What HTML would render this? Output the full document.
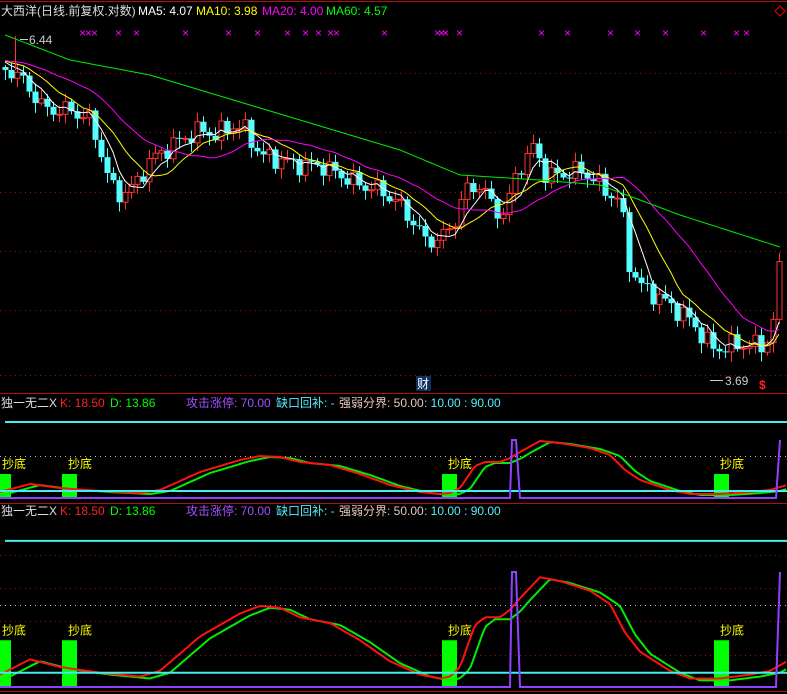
<!DOCTYPE html>
<html><head><meta charset="utf-8"><style>
html,body{margin:0;padding:0;background:#000;width:787px;height:694px;overflow:hidden}
svg{display:block}
text{font-family:"Liberation Sans","Noto Sans CJK SC",sans-serif;font-size:12px}
</style></head><body>
<svg id="s" width="787" height="694" xmlns="http://www.w3.org/2000/svg">
<rect width="787" height="694" fill="#000"/>
<g id="grid" stroke="#a01010" stroke-dasharray="1,4" stroke-width="1">
<line x1="0" y1="73.5" x2="787" y2="73.5"/><line x1="0" y1="132.5" x2="787" y2="132.5"/>
<line x1="0" y1="192.5" x2="787" y2="192.5"/><line x1="0" y1="251.5" x2="787" y2="251.5"/>
<line x1="0" y1="310.5" x2="787" y2="310.5"/><line x1="0" y1="375.5" x2="787" y2="375.5"/>
<line x1="0" y1="555.5" x2="787" y2="555.5"/><line x1="0" y1="588.5" x2="787" y2="588.5"/>
<line x1="0" y1="621.5" x2="787" y2="621.5"/><line x1="0" y1="655.5" x2="787" y2="655.5"/>
</g>
<line x1="0" y1="456.5" x2="787" y2="456.5" stroke="#e0b0a0" stroke-dasharray="1,4"/>
<line x1="0" y1="605.5" x2="787" y2="605.5" stroke="#e0b0a0" stroke-dasharray="1,4"/>
<line x1="0" y1="393.5" x2="787" y2="393.5" stroke="#b01010"/>
<line x1="0" y1="503.5" x2="787" y2="503.5" stroke="#b01010"/>
<line x1="0" y1="691.5" x2="787" y2="691.5" stroke="#b01010"/>
<line x1="0" y1="1.5" x2="787" y2="1.5" stroke="#b01010"/>
<g id="main"></g>
<g font-size="13">
<text x="1" y="15" fill="#ddd" font-size="13">大西洋(日线.前复权.对数)</text>
<text x="138" y="15" fill="#fff" font-size="13">MA5: 4.07</text>
<text x="196" y="15" fill="#ff0" font-size="13">MA10: 3.98</text>
<text x="262" y="15" fill="#f0f" font-size="13">MA20: 4.00</text>
<text x="326" y="15" fill="#0f0" font-size="13">MA60: 4.57</text>
</g>
<path d="M780 6 L785 11 L780 16 L775 11Z" fill="none" stroke="#e00"/>
<text x="29" y="44" fill="#ccc" font-size="13">6.44</text>
<line x1="20" y1="39.5" x2="28" y2="39.5" stroke="#ccc"/>
<text x="725" y="385" fill="#ccc" font-size="13">3.69</text>
<line x1="710" y1="380.5" x2="723" y2="380.5" stroke="#ccc"/>
<rect x="416" y="376" width="15" height="15" fill="#103060"/>
<text x="417" y="388" fill="#fff">财</text>
<text x="759" y="389" fill="#f22" font-weight="bold">$</text>
<g id="pan"></g>
<g font-size="12">
<text x="1" y="407" fill="#ddd">独一无二X</text><text x="60" y="407" fill="#f22">K: 18.50</text><text x="110" y="407" fill="#0f0">D: 13.86</text>
<text x="186" y="407" fill="#a050ff">攻击涨停: 70.00</text><text x="276" y="407" fill="#5ef">缺口回补: -</text>
<text x="339" y="407" fill="#e8c8b8">强弱分界: 50.00</text><text x="424" y="407" fill="#5ef">: 10.00 : 90.00</text>
<text x="1" y="515" fill="#ddd">独一无二X</text><text x="60" y="515" fill="#f22">K: 18.50</text><text x="110" y="515" fill="#0f0">D: 13.86</text>
<text x="186" y="515" fill="#a050ff">攻击涨停: 70.00</text><text x="276" y="515" fill="#5ef">缺口回补: -</text>
<text x="339" y="515" fill="#e8c8b8">强弱分界: 50.00</text><text x="424" y="515" fill="#5ef">: 10.00 : 90.00</text>
</g>
</svg>
<script>
(function(){
var NS="http://www.w3.org/2000/svg";
function el(p,t,a){var e=document.createElementNS(NS,t);for(var k in a)e.setAttribute(k,a[k]);p.appendChild(e);return e;}
function interp(k,x){for(var i=0;i<k.length-1;i++){if(x<=k[i+1][0]){var t=(x-k[i][0])/(k[i+1][0]-k[i][0]);return k[i][1]+t*(k[i+1][1]-k[i][1]);}}return k[k.length-1][1];}
var main=document.getElementById('main');
var ck=[[5,70],[15,72],[30,90],[45,110],[70,110],[90,120],[100,150],[110,185],[120,195],[135,185],[150,160],[165,150],[180,140],[200,130],[215,135],[235,125],[245,130],[260,155],[280,160],[300,165],[320,165],[340,175],[360,185],[380,190],[400,205],[415,225],[425,240],[440,240],[455,220],[465,190],[480,185],[495,210],[505,215],[515,175],[525,160],[535,145],[545,175],[560,175],[580,170],[595,180],[610,195],[620,200],[630,270],[640,285],[655,295],[670,305],[690,320],[705,340],[715,350],[730,345],[745,345],[765,345],[772,330],[780,260]];
var C=[],X=[];
for(var i=0;i<130;i++){var x=5+6*i;X.push(x);C.push(interp(ck,x)+7*Math.sin(i*1.7)+4*Math.sin(i*3.1));}
for(var i=0;i<130;i++){var o=i?C[i-1]:C[0]-3,c=C[i];var up=c<o;var tp=Math.min(o,c),bt=Math.max(o,c);if(bt-tp<1)bt=tp+1;
var hi=tp-2-7*Math.abs(Math.sin(i*2.3)),lo=bt+2+8*Math.abs(Math.cos(i*1.3));
var col=up?"#f33":"#5ff";
el(main,"line",{x1:X[i]+.5,y1:hi,x2:X[i]+.5,y2:lo,stroke:col});
if(up)el(main,"rect",{x:X[i]-2,y:tp,width:5,height:bt-tp,fill:"#000",stroke:col});
else el(main,"rect",{x:X[i]-2.5,y:tp,width:6,height:bt-tp,fill:col});}
function ma(n){var pts=[];for(var i=0;i<130;i++){var s=0;for(var j=0;j<n;j++){var k=i-j;s+=k>=0?C[k]:60;}pts.push(X[i]+","+(s/n).toFixed(1));}return pts.join(" ");}
el(main,"polyline",{points:ma(5),fill:"none",stroke:"#fff"});
el(main,"polyline",{points:ma(10),fill:"none",stroke:"#ff0"});
el(main,"polyline",{points:ma(20),fill:"none",stroke:"#f0f"});
var gk=[[5,35],[70,60],[150,75],[200,90],[300,120],[400,150],[460,175],[540,180],[600,185],[680,215],[780,247]];
var gp=[];for(var x=5;x<=780;x+=5)gp.push(x+","+interp(gk,x).toFixed(1));
el(main,"polyline",{points:gp.join(" "),fill:"none",stroke:"#0e0"});
el(main,"line",{x1:15.5,y1:36,x2:15.5,y2:70,stroke:"#f33"});
var xs=[82,88,94,118,136,185,228,257,287,305,318,330,336,384,437,441,445,459,541,567,610,637,665,703,736,746];
xs.forEach(function(x){el(main,"text",{x:x-3,y:37,fill:"#f0f","font-size":"9"}).textContent="×";});
var pan=document.getElementById('pan');
var kk=[[0,492],[30,484],[60,488],[100,491],[140,493],[160,490],[200,472],[240,460],[260,456],[280,457],[300,462],[330,465],[360,474],[390,485],[420,492],[440,494],[450,493],[460,488],[475,466],[485,462],[500,462],[510,458],[520,452],[540,441],[560,443],[590,448],[610,455],[625,470],[640,480],[670,490],[690,494],[720,494],[750,492],[770,490],[787,485]];
function draw(base,sc,tpy){
 function Y(y){return base-(499-y)*sc;}
 el(pan,"line",{x1:5,y1:Y(422),x2:787,y2:Y(422),stroke:"#4ee",'stroke-width':2});
 [[0,11],[62,15],[442,15],[714,15]].forEach(function(b){el(pan,"rect",{x:b[0],y:Y(474),width:b[1],height:base-Y(474),fill:"#0f0"});
  el(pan,"text",{x:b[0]+(b[0]?6:2),y:Y(474)-6,fill:"#ff0","font-size":"13"}).textContent="抄底";});
 var kp=[],dp=[];for(var x=0;x<=787;x+=3){kp.push(x+","+Y(interp(kk,x)).toFixed(1));dp.push(x+","+Y(interp(kk,x-10)+1).toFixed(1));}
 el(pan,"polyline",{points:dp.join(" "),fill:"none",stroke:"#0e0",'stroke-width':2});
 el(pan,"polyline",{points:kp.join(" "),fill:"none",stroke:"#f11",'stroke-width':2});
 el(pan,"line",{x1:0,y1:Y(491),x2:787,y2:Y(491),stroke:"#4ee",'stroke-width':2});
 el(pan,"polyline",{points:"0,"+(base-1)+" 510,"+(base-1)+" 512,"+tpy+" 516,"+tpy+" 520,"+(base-1)+" 776,"+(base-1)+" 780,"+tpy,fill:"none",stroke:"#9040ff",'stroke-width':2});
}
draw(499,1,440);
draw(688,1.91,572);
})();
</script>
</body></html>
